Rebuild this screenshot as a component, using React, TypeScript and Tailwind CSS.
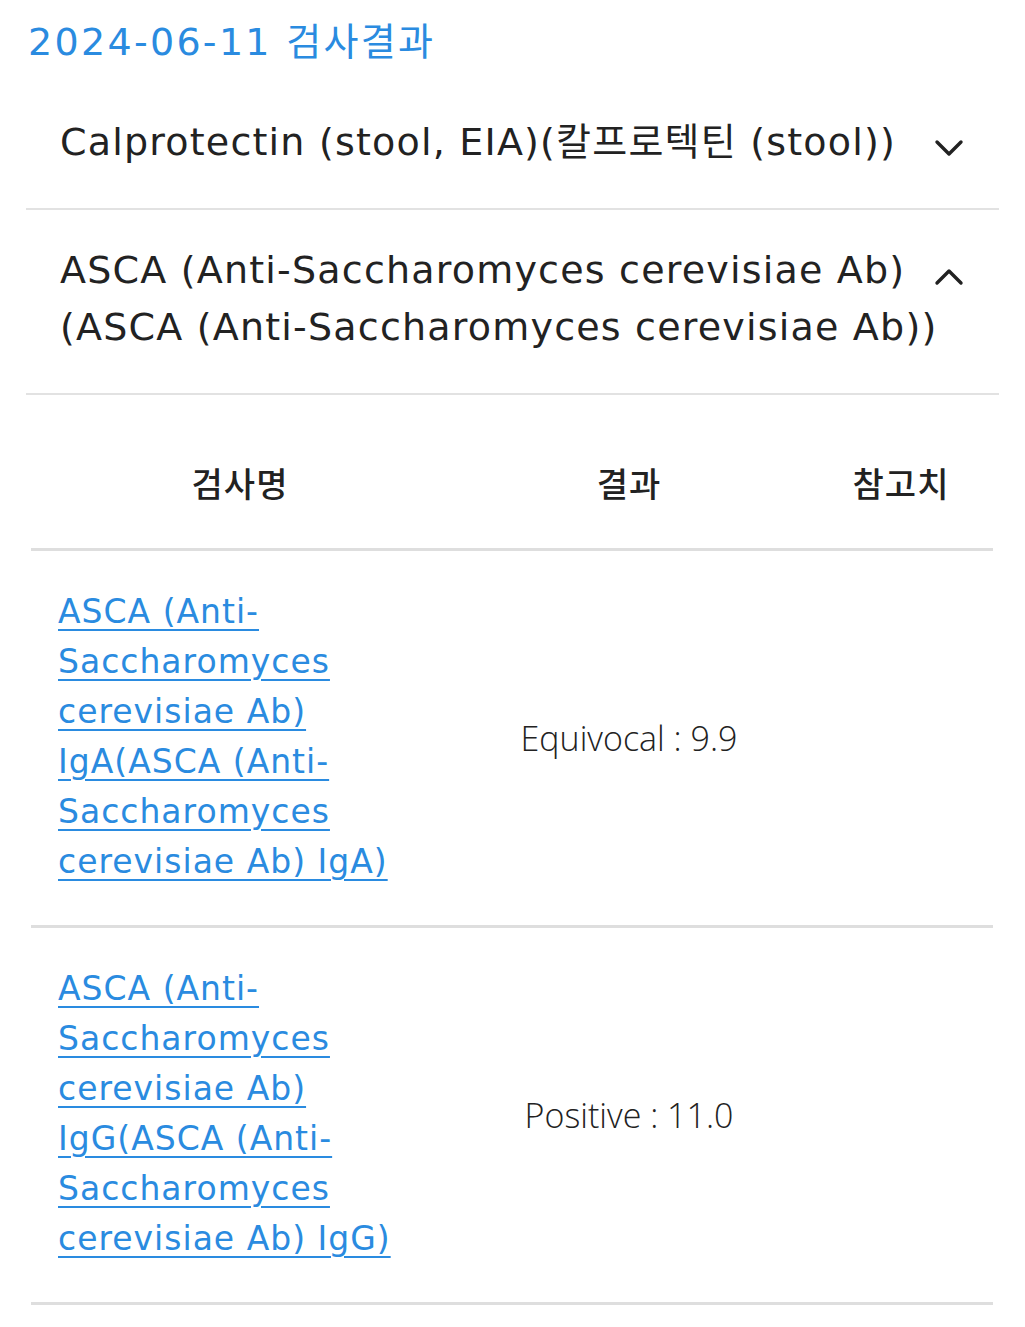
import { ChevronDown, ChevronUp } from "lucide-react";

const font = { fontFamily: '"DejaVu Sans", "Noto Sans CJK KR", sans-serif' };

const rows = [
  {
    name: "ASCA (Anti-Saccharomyces cerevisiae Ab) IgA(ASCA (Anti-Saccharomyces cerevisiae Ab) IgA)",
    result: "Equivocal : 9.9",
  },
  {
    name: "ASCA (Anti-Saccharomyces cerevisiae Ab) IgG(ASCA (Anti-Saccharomyces cerevisiae Ab) IgG)",
    result: "Positive : 11.0",
  },
];

function AccordionItem({ title, open, className }: { title: string; open?: boolean; className?: string }) {
  return (
    <div className={`relative border-b-2 border-[#e2e2e2] pl-[34px] pr-[56px] ${className ?? ""}`}>
      <p className="text-[38px] leading-[57px] text-[#222] tracking-[1.2px]">{title}</p>
      <span className="absolute right-[26px] top-0 text-[#222]">
        {open ? (
          <ChevronUp size={48} strokeWidth={1.7} className="mt-[43px]" />
        ) : (
          <ChevronDown size={48} strokeWidth={1.7} className="mt-[54px]" />
        )}
      </span>
    </div>
  );
}

export default function App() {
  return (
    <div className="min-h-[1327px] bg-white" style={font}>
      <div className="px-[26px] pt-[14px]">
        <h1 className="text-[38px] leading-[56px] text-[#2a8be0] pl-[2px] tracking-[2.3px]">2024-06-11 검사결과</h1>

        <AccordionItem className="pt-[44px] pb-[37px]" title="Calprotectin (stool, EIA)(칼프로텍틴 (stool))" />
        <AccordionItem
          className="pt-[32px] pb-[37px]"
          title="ASCA (Anti-Saccharomyces cerevisiae Ab) (ASCA (Anti-Saccharomyces cerevisiae Ab))"
          open
        />

        <table className="mx-[5px] w-[962px] table-fixed border-collapse">
          <colgroup>
            <col className="w-[418px]" />
            <col className="w-[360px]" />
            <col className="w-[184px]" />
          </colgroup>
          <thead>
            <tr className="border-b-[3px] border-[#dedede]">
              <th className="h-[154px] pt-[28px] text-[34px] font-medium text-[#222] tracking-[1px]">검사명</th>
              <th className="pt-[28px] text-[34px] font-medium text-[#222] tracking-[1px]">결과</th>
              <th className="pt-[28px] text-[34px] font-medium text-[#222] tracking-[1px]">참고치</th>
            </tr>
          </thead>
          <tbody>
            {rows.map((r) => (
              <tr key={r.result} className="border-b-[3px] border-[#dedede]">
                <td className="pt-[36px] pb-[38px] pl-[27px] pr-[40px] align-middle">
                  <a
                    href="#"
                    className="text-[33px] leading-[50px] tracking-[1px] text-[#2a8be0] underline underline-offset-[6px] decoration-2"
                  >
                    {r.name}
                  </a>
                </td>
                <td
                  className="pt-[2px] text-center text-[34px] font-light text-[#222]"
                  style={{ fontFamily: '"Open Sans", sans-serif' }}
                >
                  {r.result}
                </td>
                <td />
              </tr>
            ))}
          </tbody>
        </table>
      </div>
    </div>
  );
}
